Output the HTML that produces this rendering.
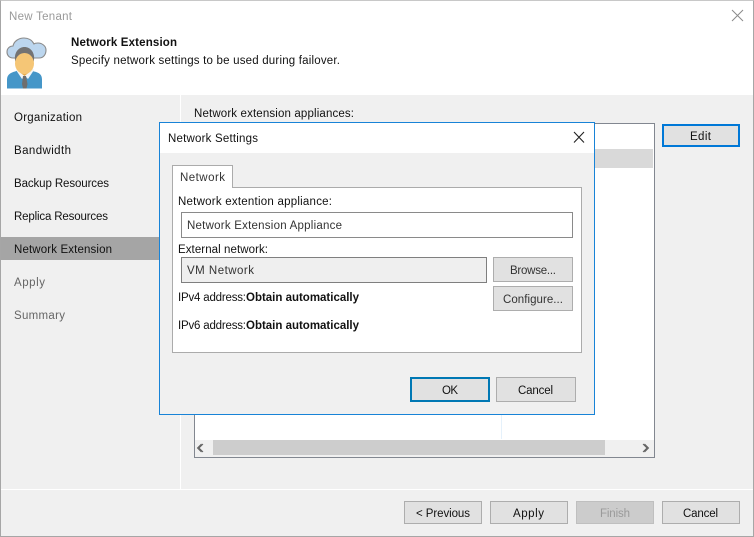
<!DOCTYPE html>
<html><head><meta charset="utf-8"><title>New Tenant</title>
<style>
html,body{margin:0;padding:0;width:754px;height:537px;overflow:hidden;background:#f0f0f0}
.b{position:absolute;box-sizing:border-box}
.btn{background:#e1e1e1;border:1px solid #adadad}
svg.t{position:absolute;left:0;top:0}
svg.t text{font-family:"Liberation Sans",sans-serif;font-size:11.5px;fill:#111}
svg.t .bd{font-weight:bold;font-size:11.5px}
svg.t .g{fill:#666}
svg.t .d{fill:#9a9a9a}
svg.t .m{fill:#333}
</style></head><body>
<div class="b" style="left:0;top:0;width:754px;height:95px;background:#fff"></div>
<div class="b" style="left:0;top:0;width:754px;height:537px;border:1px solid #a6a6a6;border-top-color:#c8c8c8"></div>
<div class="b" style="left:180px;top:95px;width:1px;height:394px;background:#fff"></div>
<div class="b" style="left:1px;top:489px;width:752px;height:1px;background:#fff"></div>
<div class="b" style="left:1px;top:237px;width:158px;height:23px;background:#a5a5a5"></div>

<div class="b" style="left:194px;top:123px;width:461px;height:335px;background:#fff;border:1px solid #828790"></div>
<div class="b" style="left:195px;top:149px;width:458px;height:19px;background:#d9d9d9"></div>
<div class="b" style="left:501px;top:124px;width:1px;height:315px;background:#e5f1fb"></div>
<div class="b" style="left:195px;top:440px;width:459px;height:17px;background:#f0f0f0"></div>
<div class="b" style="left:213px;top:440px;width:392px;height:15px;background:#cdcdcd"></div>
<div class="b" style="left:662px;top:124px;width:78px;height:23px;background:#e1e1e1;border:2px solid #0078d7"></div>

<div class="b btn" style="left:404px;top:501px;width:78px;height:23px"></div>
<div class="b btn" style="left:490px;top:501px;width:78px;height:23px"></div>
<div class="b" style="left:576px;top:501px;width:78px;height:23px;background:#ccc;border:1px solid #bfbfbf"></div>
<div class="b btn" style="left:662px;top:501px;width:78px;height:23px"></div>

<div class="b" style="left:159px;top:122px;width:436px;height:293px;background:#f0f0f0;border:1px solid #1883d7"></div>
<div class="b" style="left:160px;top:123px;width:434px;height:30px;background:#fff"></div>
<div class="b" style="left:172px;top:187px;width:410px;height:166px;background:#fff;border:1px solid #ababab"></div>
<div class="b" style="left:172px;top:165px;width:61px;height:23px;background:#fff;border:1px solid #ababab;border-bottom:0"></div>
<div class="b" style="left:181px;top:212px;width:392px;height:26px;background:#fff;border:1px solid #8a8a8a"></div>
<div class="b" style="left:181px;top:257px;width:306px;height:26px;background:#efefef;border:1px solid #7f7f7f"></div>
<div class="b" style="left:493px;top:257px;width:80px;height:25px;background:#e1e1e1;border:1px solid #adadad"></div>
<div class="b" style="left:493px;top:286px;width:80px;height:25px;background:#e1e1e1;border:1px solid #adadad"></div>
<div class="b" style="left:410px;top:377px;width:80px;height:25px;background:#e1e1e1;border:2px solid #0078b4"></div>
<div class="b" style="left:496px;top:377px;width:80px;height:25px;background:#e1e1e1;border:1px solid #adadad"></div>

<svg class="t" width="754" height="537" viewBox="0 0 754 537">
<path d="M732 10l11 11M743 10l-11 11" stroke="#8a8a8a" stroke-width="1" fill="none"/>
<path d="M574 132l10 10.500M584 132l-10 10.500" stroke="#222" stroke-width="1.100" fill="none"/>
<path d="M203 444l-4 4 4 4M201.500 444l-4 4 4 4" stroke="#606060" stroke-width="1" fill="none"/>
<path d="M643 444l4 4-4 4M644.500 444l4 4-4 4" stroke="#606060" stroke-width="1" fill="none"/>

<path d="M13 58c-4 0-6-3-6-6 0-4 3-6 6-6 1-5 6-8 11-8 4 0 8 2 10 6 1-1 3-1 4-1 4 0 8 3 8 7 0 5-3 8-7 8z" fill="#bcd6ee" stroke="#8b8b8b" stroke-width="1.100"/>
<path d="M7 88.500v-9c0-5 4-7 8-8l5-2h9l5 2c5 1 8 3 8 8v9z" fill="#4596c8"/>
<path d="M16 70l6 9 3-3 3 3 6-9-2-2H18z" fill="#f2f5f7"/>
<path d="M18 66h13v5l-6.500 5-6.500-5z" fill="#e6ab4f"/>
<path d="M23 76h3l1.500 8-1 4.500h-3.500l-1-4.500z" fill="#6e6e6e"/>
<path d="M15 60c-1-8 4-13 9.500-13S35 52 34 60c-.2 1.500-.7 2.500-1 3h-17c-.3-.5-.8-1.500-1-3z" fill="#737373"/>
<ellipse cx="24.500" cy="63.500" rx="9.500" ry="10.500" fill="#f5c676"/>

<text x="9" y="20" textLength="63" class="d">New Tenant</text>
<text x="71" y="46" textLength="106" class="bd">Network Extension</text>
<text x="71" y="64" textLength="269">Specify network settings to be used during failover.</text>
<text x="14" y="121" textLength="68">Organization</text>
<text x="14" y="154" textLength="57">Bandwidth</text>
<text x="14" y="187" textLength="95">Backup Resources</text>
<text x="14" y="220" textLength="94">Replica Resources</text>
<text x="14" y="253" textLength="98">Network Extension</text>
<text x="14" y="286" textLength="31" class="g">Apply</text>
<text x="14" y="319" textLength="51" class="g">Summary</text>
<text x="194" y="117" textLength="160">Network extension appliances:</text>
<text x="168" y="142" textLength="90">Network Settings</text>
<text x="180" y="181" textLength="45" class="m">Network</text>
<text x="178" y="205" textLength="154">Network extention appliance:</text>
<text x="187" y="229" textLength="155" class="m">Network Extension Appliance</text>
<text x="178" y="253" textLength="90">External network:</text>
<text x="187" y="274" textLength="67" class="m">VM Network</text>
<text x="178" y="301" textLength="68">IPv4 address:</text>
<text x="246" y="301" textLength="113" class="bd">Obtain automatically</text>
<text x="178" y="329" textLength="68">IPv6 address:</text>
<text x="246" y="329" textLength="113" class="bd">Obtain automatically</text>
<text x="510" y="274" textLength="46" class="m">Browse...</text>
<text x="503" y="303" textLength="60" class="m">Configure...</text>
<text x="442" y="394" textLength="16">OK</text>
<text x="518" y="394" textLength="35">Cancel</text>
<text x="690" y="140" textLength="21">Edit</text>
<text x="416" y="517" textLength="54">&lt; Previous</text>
<text x="513" y="517" textLength="31">Apply</text>
<text x="600" y="517" textLength="30" class="d">Finish</text>
<text x="683" y="517" textLength="35">Cancel</text>
</svg>
</body></html>
